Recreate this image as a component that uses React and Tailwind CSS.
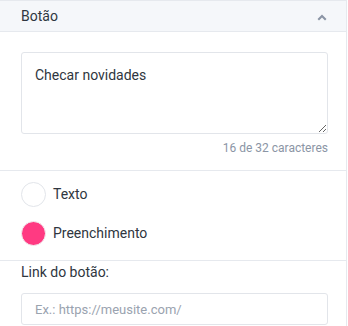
import React from "react";

export default function App() {
  return (
    <div
      className="w-[347px] h-[326px] overflow-hidden bg-white border-r border-t border-[#e6e9ee] text-[#2f3640]"
      style={{ fontFamily: "Roboto, 'Liberation Sans', sans-serif" }}
    >
      <div className="h-[31px] bg-[#f5f7fa] border-b border-[#e6e9ee] flex items-center justify-between pl-[21px] pr-[19px]">
        <span className="text-[14px] leading-none">Botão</span>
        <svg width="10" height="7" viewBox="0 0 10 7" className="mt-[2px]">
          <path d="M5 0.5 L9.5 5 L8 6.5 L5 3.5 L2 6.5 L0.5 5 Z" fill="#8b95a5" />
        </svg>
      </div>

      <div className="pl-[21px] pr-[18px] pt-[20px] pb-[14px] border-b border-[#e6e9ee]">
        <textarea
          readOnly
          defaultValue="Checar novidades"
          className="block w-full h-[82px] border border-[#e2e5ea] rounded-[3px] px-[13px] py-[12px] text-[14px] leading-[20px] text-[#2f3640] outline-none resize-y"
          style={{ fontFamily: "Roboto, 'Liberation Sans', sans-serif" }}
        />
        <div className="mt-[6px] text-right text-[12px] leading-[16px] text-[#8b95a5]">
          16 de 32 caracteres
        </div>
      </div>

      <div className="px-[21px] pt-[11px] pb-[14px] border-b border-[#e6e9ee] flex flex-col gap-[14px]">
        <div className="flex items-center gap-[7px]">
          <div className="w-[25px] h-[25px] rounded-full border border-[#e2e5ea] bg-white" />
          <span className="text-[14px]">Texto</span>
        </div>
        <div className="flex items-center gap-[7px]">
          <div className="w-[25px] h-[25px] rounded-full bg-[#ff3a82] border border-[#f2f2f2]" />
          <span className="text-[14px]">Preenchimento</span>
        </div>
      </div>

      <div className="pl-[21px] pr-[18px] pt-[1px]">
        <div className="text-[14px] leading-[20px]">Link do botão:</div>
        <input
          readOnly
          placeholder="Ex.: https://meusite.com/"
          className="mt-[11px] block w-full h-[32px] border border-[#e2e5ea] rounded-[3px] px-[13px] text-[13px] text-[#2f3640] placeholder:text-[#9aa3af] outline-none"
          style={{ fontFamily: "Roboto, 'Liberation Sans', sans-serif" }}
        />
      </div>
    </div>
  );
}
